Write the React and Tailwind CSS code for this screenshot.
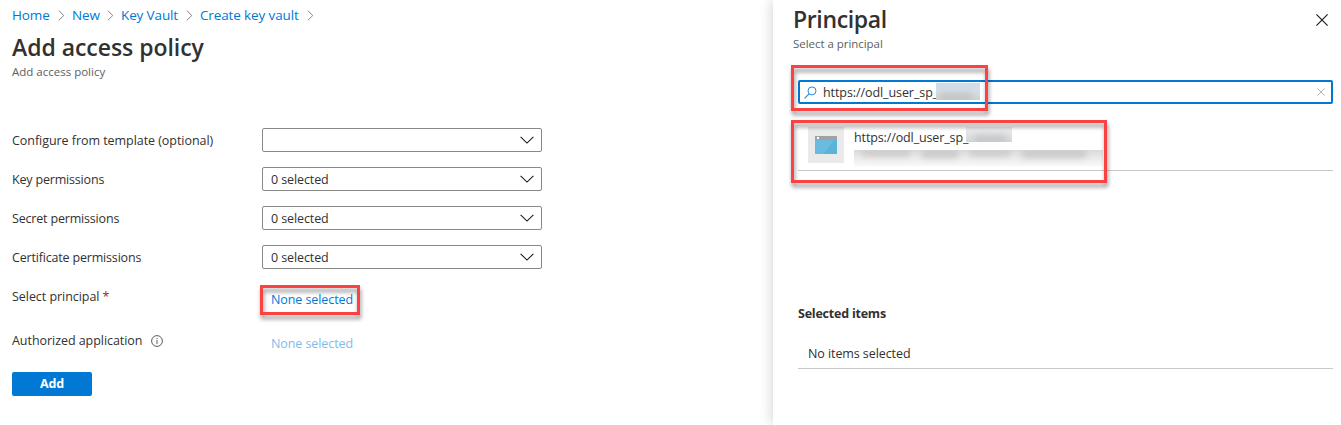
import React from "react";

function ChevronRight() {
  return (
    <svg className="h-[11px] w-[7px] shrink-0" viewBox="0 0 7 11" fill="none">
      <path d="M0.8 0.7L5.8 5.5L0.8 10.3" stroke="#8a8886" strokeWidth="1" />
    </svg>
  );
}

function ChevronDown() {
  return (
    <svg className="h-[8px] w-[14px]" viewBox="0 0 14 8" fill="none">
      <path d="M0.6 0.8L7 7.1L13.4 0.8" stroke="#1b1a19" strokeWidth="1.1" />
    </svg>
  );
}

function Cross({ className }) {
  return (
    <svg className={className} viewBox="0 0 12 12" fill="none">
      <path d="M0.4 0.4L11.6 11.6M11.6 0.4L0.4 11.6" stroke="currentColor" strokeWidth="1.15" />
    </svg>
  );
}

function Highlight({ className }) {
  return (
    <div
      className={`pointer-events-none absolute z-10 border-[3px] border-[#fb4141] drop-shadow-[1px_4px_2px_rgba(0,0,0,0.42)] ${className}`}
    />
  );
}

function SelectRow({ label, value, tracking }) {
  return (
    <div className="flex h-6 items-center">
      <span className={`w-[250px] pt-[2px] ${tracking}`}>{label}</span>
      <div className="flex h-6 w-[280px] items-center justify-between rounded-[2px] border border-[#8a8886] pr-[7px] pl-2">
        <span className="pt-[2px] tracking-[-0.1px]">{value}</span>
        <ChevronDown />
      </div>
    </div>
  );
}

const crumbs = [
  { label: "Home", width: "w-[38px]" },
  { label: "New", width: "w-[27px]" },
  { label: "Key Vault", width: "w-[57px]" },
  { label: "Create key vault", width: "w-[99px]" },
];

const rows = [
  { label: "Configure from template (optional)", value: "", tracking: "tracking-[-0.05px]" },
  { label: "Key permissions", value: "0 selected", tracking: "tracking-[-0.18px]" },
  { label: "Secret permissions", value: "0 selected", tracking: "tracking-[-0.18px]" },
  { label: "Certificate permissions", value: "0 selected", tracking: "tracking-[-0.18px]" },
];

function PolicyForm() {
  return (
    <main className="w-[773px] shrink-0 pl-3">
      <nav className="flex h-[30px] items-center text-[13.5px] text-[#0078d4]">
        {crumbs.map((c) => (
          <div key={c.label} className="mr-[7px] flex items-center gap-2">
            <span className={`whitespace-nowrap tracking-[-0.13px] ${c.width}`}>{c.label}</span>
            <ChevronRight />
          </div>
        ))}
      </nav>
      <h1 className="h-[33px] text-[23px] leading-[34px] font-semibold tracking-[-0.04px] text-[#323130]">
        Add access policy
      </h1>
      <p className="h-[18px] text-[11.5px] leading-[18px] text-[#605e5c]">Add access policy</p>
      <div className="mt-[47px] flex flex-col gap-[15px]">
        {rows.map((r) => (
          <SelectRow key={r.label} {...r} />
        ))}
      </div>
      <div className="mt-4 flex h-[30px]">
        <span className="w-[248px] pt-[2px] tracking-[-0.05px]">
          Select principal <span className="text-[#a4262c]">*</span>
        </span>
        <div className="relative h-[30px] w-[100px] pt-[5px] pl-[11px]">
          <span className="whitespace-nowrap tracking-[-0.08px] text-[#0078d4]">None selected</span>
          <Highlight className="inset-0" />
        </div>
      </div>
      <div className="mt-[14px] flex h-[30px]">
        <span className="flex w-[248px] gap-2 pt-[2px] tracking-[-0.05px]">
          <span className="w-[131px] whitespace-nowrap">Authorized application</span>
          <svg className="mt-1 h-3 w-3" viewBox="0 0 12 12" fill="none">
            <circle cx="6" cy="6" r="5.4" stroke="#605e5c" />
            <path d="M6 5V9M6 3V4.1" stroke="#605e5c" />
          </svg>
        </span>
        <span className="pt-[5px] pl-[11px] tracking-[-0.08px] text-[#80bcea]">None selected</span>
      </div>
      <button className="mt-[13px] flex h-6 w-20 items-center justify-center rounded-[2px] bg-[#0078d4] font-bold tracking-[-0.08px] text-white">
        Add
      </button>
    </main>
  );
}

function AppIcon() {
  return (
    <div className="flex h-9 w-9 items-center justify-center bg-[#eaeaea]">
      <svg className="h-[18px] w-[22px]" viewBox="0 0 22 18">
        <path d="M0 4H22V18H0Z" fill="#59b4d9" />
        <path d="M0 4H19L9 18H0Z" fill="#6abbdd" />
        <path d="M0 0H22V4H0Z" fill="#a0a1a2" />
        <rect x="2" y="1" width="2" height="2" fill="#fff" />
      </svg>
    </div>
  );
}

function PrincipalPanel() {
  return (
    <aside className="relative w-[568px] shrink-0 bg-white pr-2 pl-[25px] shadow-[0_0_13px_rgba(0,0,0,0.2)]">
      <header className="flex h-[80px] justify-between">
        <div className="-ml-[5px]">
          <h2 className="h-[34px] text-[23px] leading-[38px] font-semibold tracking-[-0.36px] text-[#323130]">
            Principal
          </h2>
          <p className="text-[11.5px] leading-[19px] tracking-[-0.04px] text-[#605e5c]">Select a principal</p>
        </div>
        <Cross className="mt-[14px] mr-[5px] h-3 w-3 text-[#1b1a19]" />
      </header>
      <div className="flex h-6 items-center rounded-[2px] border-2 border-[#0078d4] pr-[6px] pl-1">
        <svg className="h-[13px] w-[13px]" viewBox="0 0 13 13" fill="none">
          <circle cx="8" cy="4.9" r="4" stroke="#2b88d8" />
          <path d="M5.1 7.8L0.6 12.3" stroke="#2b88d8" strokeWidth="1.1" />
        </svg>
        <span className="ml-[6px] w-[113px] pt-[2px] whitespace-nowrap tracking-[-0.08px]">https://odl_user_sp_</span>
        <div className="-mt-[2px] h-[17px] w-11 overflow-hidden bg-linear-to-b from-[#cbdeee] via-[#d8dde1] to-[#cfd3d6]">
          <div className="mt-[10px] ml-1 h-2 w-8 bg-[#b9bcbf] opacity-70 blur-[3px]" />
        </div>
        <Cross className="ml-auto h-2 w-2 text-[#a19f9d]" />
      </div>
      <div className="flex h-[67px] border-b border-[#c8c8c8] pt-[23px] pl-[10px]">
        <AppIcon />
        <div className="ml-[10px]">
          <div className="flex h-[23px]">
            <span className="w-[112px] pt-px whitespace-nowrap tracking-[-0.12px]">https://odl_user_sp_</span>
            <div className="h-[15px] w-[46px] overflow-hidden bg-linear-to-b from-[#eeeeee] to-[#d3d6d8]">
              <div className="mt-[8px] ml-2 h-2 w-8 bg-[#bcbec0] opacity-70 blur-[3px]" />
            </div>
          </div>
          <div className="flex h-4 w-[249px] gap-3 overflow-hidden bg-linear-to-b from-[#dadada] via-[#ebebea] to-[#f8f8f8] pl-2">
            <div className="h-1.5 w-12 bg-[#bdbdbd] opacity-70 blur-[3px]" />
            <div className="h-2 w-9 bg-[#bdbdbd] opacity-70 blur-[3px]" />
            <div className="h-1.5 w-10 bg-[#bdbdbd] opacity-70 blur-[3px]" />
            <div className="h-2 w-16 bg-[#bdbdbd] opacity-70 blur-[3px]" />
          </div>
        </div>
      </div>
      <h3 className="mt-[133px] h-5 leading-5 font-bold tracking-[-0.22px] text-[#323130]">Selected items</h3>
      <div className="mt-[15px] h-[30px] border-b border-[#c8c8c8] pt-[5px] pl-[10px]">
        <span className="tracking-[-0.08px]">No items selected</span>
      </div>
      <Highlight className="top-[65px] left-[18px] h-[46px] w-[197px]" />
      <Highlight className="top-[120px] left-[18px] h-[63px] w-[316px]" />
    </aside>
  );
}

export default function App() {
  return (
    <div className="flex h-[425px] w-[1341px] overflow-hidden bg-white font-['Open_Sans',sans-serif] text-[12.5px] leading-5 text-[#323130]">
      <PolicyForm />
      <PrincipalPanel />
    </div>
  );
}
